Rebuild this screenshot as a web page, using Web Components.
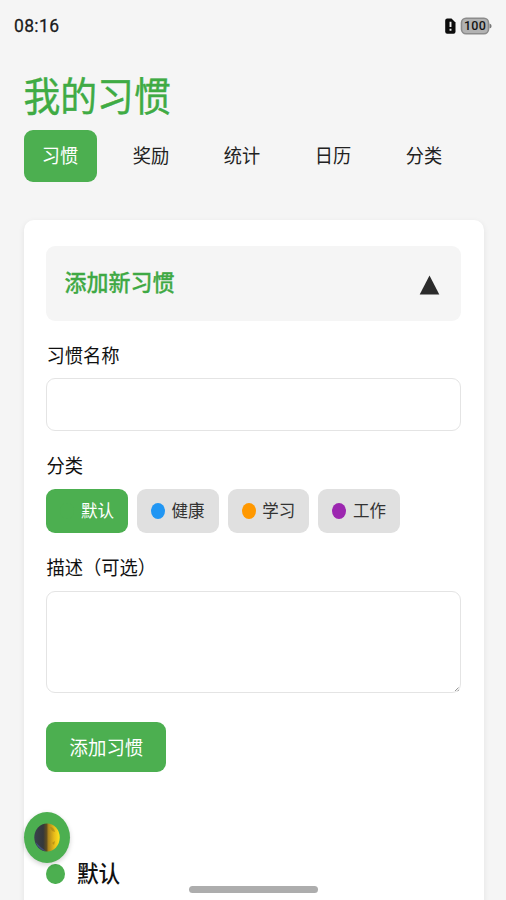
<!DOCTYPE html>
<html lang="zh-CN">
<head>
<meta charset="utf-8">
<title>我的习惯</title>
<style>
body{margin:0;height:900px;overflow:hidden;background:#f5f5f5;color:#222;font-family:"Noto Sans CJK SC",sans-serif}
</style>
</head>
<body>
<habit-app></habit-app>
<script>
const define = (name, html) => {
  const t = document.createElement('template');
  t.innerHTML = html;
  customElements.define(name, class extends HTMLElement {
    constructor() {
      super();
      this.attachShadow({mode: 'open'}).append(t.content.cloneNode(true));
    }
  });
};

define('tall-text', `<style>
:host{display:inline-block;line-height:1.2;white-space:nowrap;transform:translateY(var(--shift,0px)) scaleY(var(--tall,1.04))}
</style><slot></slot>`);

define('status-bar', `<style>
:host{display:flex;height:52px;box-sizing:border-box;padding:0 14px;align-items:center;justify-content:space-between;color:#1b1b1b}
tall-text{font:400 17.5px/1.2 Roboto,sans-serif;letter-spacing:.35px;-webkit-text-stroke:.25px #1b1b1b;--tall:1.08}
svg{display:block}
</style>
<tall-text>08:16</tall-text>
<svg width="48" height="20" viewBox="0 0 48 20">
<path d="M1.2 4.500Q1.200 2.500 3.200 2.500H7.500L11.500 6.500V15.700Q11.500 17.700 9.500 17.700H3.200Q1.200 17.700 1.200 15.700Z" fill="#0c0c0c"/>
<path d="M6.500 5.800V11M6.500 12.700V14.700" stroke="#eee" stroke-width="1.900"/>
<rect x="17.500" y="2.300" width="27" height="15.400" rx="4.500" fill="#b2b2b2" stroke="#8c8c8c" stroke-width="1.600"/>
<path d="M45.500 7.500Q47.600 8 47.600 10T45.500 12.500Z" fill="#777"/>
<text x="31" y="14.400" text-anchor="middle" font-family="Roboto" font-weight="500" font-size="12.500" letter-spacing=".3" fill="#151515">100</text>
</svg>`);

define('nav-tab', `<style>
:host{display:flex;width:73px;height:52px;border-radius:9px;align-items:center;justify-content:center;font-size:18.2px}
:host([active]){background:#4caf50;color:#fff}
</style><tall-text><slot></slot></tall-text>`);

define('page-header', `<style>
:host{display:block;padding:18px 23.500px 0}
h1{margin:0;height:60px;display:flex;align-items:center;font-size:36.8px;font-weight:400;color:#3fab44}
h1 tall-text{--shift:-6px;--tall:1.07;-webkit-text-stroke:.4px #3fab44}
nav{display:flex;gap:18px}
</style>
<h1><tall-text>我的习惯</tall-text></h1>
<nav><nav-tab active>习惯</nav-tab><nav-tab>奖励</nav-tab><nav-tab>统计</nav-tab><nav-tab>日历</nav-tab><nav-tab>分类</nav-tab></nav>`);

define('section-toggle', `<style>
:host{display:flex;height:75px;box-sizing:border-box;padding:0 21px 0 18px;border-radius:9px;background:#f5f5f5;align-items:center;justify-content:space-between;font-size:22px;font-weight:500;color:#3fa944;--shift:-2.500px}
tall-text{-webkit-text-stroke:.25px #3fa944}
svg{display:block;margin-top:3px}
</style><tall-text><slot></slot></tall-text>
<svg width="21" height="20" viewBox="0 0 21 20"><path d="M10.500 .5L20.300 19.500H.7Z" fill="#2b2b2b"/></svg>`);

define('form-field', `<style>
:host{display:flex;flex-direction:column;color:#111}
label{height:var(--label,36px);display:flex;align-items:center;font-size:18.3px}
label tall-text{--shift:-2px}
</style><label><tall-text><slot name="label"></slot></tall-text></label><slot></slot>`);

define('text-box', `<style>
:host{display:flex;justify-content:flex-end;align-items:flex-end;box-sizing:border-box;height:53px;border:1.500px solid #e4e4e4;border-radius:9px;background:#fff}
svg{display:none}
:host([multiline]){height:102px}
:host([multiline]) svg{display:block}
</style><svg width="5" height="5" viewBox="0 0 5 5"><path d="M0 4L3.500 .5M2.500 4.300L4 2.800" stroke="#999" stroke-width="1"/></svg>`);

define('category-chip', `<style>
:host{display:flex;box-sizing:border-box;width:81.500px;height:44px;padding-left:14px;gap:6.500px;align-items:center;border-radius:9px;background:#e0e0e0;color:#333;font-size:16.500px}
:host([active]){background:#4caf50;color:#fff}
i{width:14px;height:16px;border-radius:50%;background:var(--dot)}
</style><i></i><tall-text><slot></slot></tall-text>`);

define('submit-button', `<style>
:host{display:flex;width:120px;height:50px;border-radius:9px;background:#4caf50;color:#fff;align-items:center;justify-content:center;font-size:18.400px;--shift:-.500px}
</style><tall-text><slot></slot></tall-text>`);

define('category-heading', `<style>
:host{display:flex;gap:12px;align-items:center;height:30px;font-size:21.700px;font-weight:500;color:#111;--shift:-1.500px}
i{width:18.500px;height:20.500px;border-radius:50%;background:#4caf50}
</style><i></i><tall-text><slot></slot></tall-text>`);

define('habit-card', `<style>
:host{display:flex;flex-direction:column;box-sizing:border-box;height:720px;margin:38px 22px 0 23.500px;padding:25.500px 23px 0 22.900px;border-radius:10px;background:#fff;box-shadow:0 2px 6px rgba(0,0,0,.08)}
.chips{display:flex;gap:9.200px;height:44px}
.f1{margin-top:16.500px;--label:41px}
.f2{margin-top:16px;--label:42px}
.f3{margin-top:16px;--label:42px}
submit-button{margin-top:29px}
category-heading{margin-top:87px}
</style>
<section-toggle>添加新习惯</section-toggle>
<form-field class="f1"><span slot="label">习惯名称</span><text-box></text-box></form-field>
<form-field class="f2"><span slot="label">分类</span><div class="chips">
<category-chip active style="--dot:#4caf50">默认</category-chip>
<category-chip style="--dot:#2196f3">健康</category-chip>
<category-chip style="--dot:#ff9800">学习</category-chip>
<category-chip style="--dot:#9c27b0">工作</category-chip></div></form-field>
<form-field class="f3"><span slot="label">描述（可选）</span><text-box multiline></text-box></form-field>
<submit-button>添加习惯</submit-button>
<category-heading>默认</category-heading>`);

define('theme-toggle', `<style>
:host{position:absolute;left:23.500px;top:811.500px;width:46px;height:51px;border-radius:50%;background:#4caf50;box-shadow:0 2px 5px rgba(0,0,0,.18);display:flex;align-items:center;justify-content:center}
svg{display:block}
</style><svg width="26" height="29" viewBox="0 0 26 29">
<defs><linearGradient id="m"><stop offset="0" stop-color="#39424d"/><stop offset=".35" stop-color="#34373a"/><stop offset=".48" stop-color="#5f4d20"/><stop offset=".56" stop-color="#ad861d"/><stop offset=".78" stop-color="#e8bb19"/><stop offset="1" stop-color="#ffe51e"/></linearGradient></defs>
<ellipse cx="13" cy="14.500" rx="12.700" ry="14" fill="url(#m)"/>
<path d="M1.500 19Q4 27 12 28.200Q6 24 1.500 19Z" fill="#485994" opacity=".7"/>
<path d="M16 4Q20 4 21 9L18 8ZM18 20L21 18 20 22Z" fill="#a98416" opacity=".65"/>
</svg>`);

define('home-indicator', `<style>
:host{position:absolute;left:189px;top:886px;width:129px;height:7px;border-radius:4px;background:#adadad}
</style>`);

define('habit-app', `<style>
:host{display:block;position:relative;width:506px;height:900px;overflow:hidden}
</style>
<status-bar></status-bar><page-header></page-header><habit-card></habit-card><theme-toggle></theme-toggle><home-indicator></home-indicator>`);
</script>
</body>
</html>
